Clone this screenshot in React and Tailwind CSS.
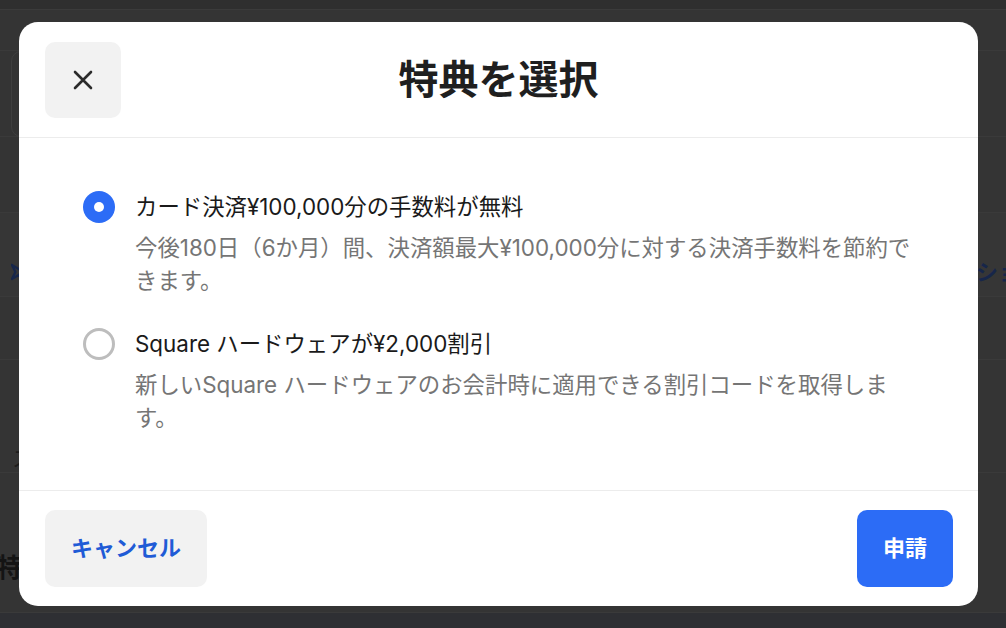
import React, { useState } from 'react';

const font = "font-[Inter,'Noto_Sans_CJK_JP',sans-serif]";

const offers = [
  {
    id: 'fee',
    title: 'カード決済¥100,000分の手数料が無料',
    desc: '今後180日（6か月）間、決済額最大¥100,000分に対する決済手数料を節約できます。',
  },
  {
    id: 'hardware',
    title: 'Square ハードウェアが¥2,000割引',
    desc: '新しいSquare ハードウェアのお会計時に適用できる割引コードを取得します。',
  },
];

const Radio = ({ checked }) =>
  checked ? (
    <span className="mt-[1px] flex h-8 w-8 shrink-0 items-center justify-center rounded-full bg-[#2c6cf6]">
      <span className="h-2.5 w-2.5 rounded-full bg-white" />
    </span>
  ) : (
    <span className="mt-[1px] h-8 w-8 shrink-0 rounded-full border-[3px] border-[#bdbdbd]" />
  );

// dimmed page behind the dialog
const Backdrop = () => (
  <div className="flex h-full flex-col">
    <div className="h-[10px] border-b border-[#3b3b3b] bg-[#2f2f2f]" />
    <div className="h-[41px] border-b border-[#3a3a3a]" />
    <div className="flex h-[86px] border-b border-[#3a3a3a] px-[11px]">
      <div className="h-[86px] w-[300px] rounded-[10px] border border-[#3f3f3f]" />
    </div>
    <div className="h-[76px] border-b border-[#3a3a3a]" />
    <div className="flex h-[84px] items-center justify-between border-b border-[#3a3a3a] bg-[#363636] pl-[11px]">
      <svg width="16" height="18" viewBox="0 0 18 20" className="mt-[34px]">
        <path d="M1 2 L9 7 L17 2 L13 10 L17 18 L9 13 L1 18 L5 10 Z" fill="none" stroke="#17264a" strokeWidth="2.6" strokeLinejoin="round" />
      </svg>
      <span className="mt-[36px] mr-[-14px] text-[22px] font-bold text-[#17264a]">ショ</span>
    </div>
    <div className="h-[63px] border-b border-[#3a3a3a]" />
    <div className="flex h-[113px] items-center border-b border-[#3a3a3a] pl-[12px] pt-[86px]">
      <span className="text-[21px] text-[#1c1c1c]">ス</span>
    </div>
    <div className="flex h-[140px] items-center border-b border-[#3a3a3a] pt-[50px]">
      <span className="ml-[-4px] text-[26px] font-bold text-[#141414]">特典</span>
    </div>
    <div className="flex-1 bg-[#2e2f33]" />
  </div>
);

export default function App() {
  const [selected, setSelected] = useState('fee');

  return (
    <div className={`relative h-[628px] w-[1006px] overflow-hidden bg-[#343434] ${font}`}>
      <Backdrop />

      <div className="absolute inset-0 flex pl-[19px] pt-[22px]">
        <div className="flex h-[584px] w-[959px] flex-col rounded-[19px] bg-white">
          {/* header */}
          <div className="relative flex h-[116px] items-center border-b border-[#ececec] px-[26px]">
            <button className="flex h-[76px] w-[76px] items-center justify-center rounded-[10px] bg-[#f2f2f2]">
              <svg width="20" height="20" viewBox="0 0 20 20">
                <path d="M2 2 L18 18 M18 2 L2 18" stroke="#2b2b2b" strokeWidth="2.6" strokeLinecap="round" />
              </svg>
            </button>
            <h2 className="pointer-events-none absolute inset-x-0 text-center text-[40px] font-bold leading-none text-[#1f1f1f]">
              特典を選択
            </h2>
          </div>

          {/* body */}
          <div className="flex flex-1 flex-col gap-[30px] pl-[64px] pr-[62px] pt-[52px]">
            {offers.map((o) => (
              <label key={o.id} className="flex cursor-pointer gap-[20px]" onClick={() => setSelected(o.id)}>
                <Radio checked={selected === o.id} />
                <div className="flex flex-col gap-[8px]">
                  <div className="text-[22.4px] leading-[33px] text-[#1a1a1a]">{o.title}</div>
                  <div className="text-[22.4px] leading-[33px] text-[#757575]">{o.desc}</div>
                </div>
              </label>
            ))}
          </div>

          {/* footer */}
          <div className="flex items-center justify-between border-t border-[#ececec] px-[25px] py-[19px]">
            <button className="ml-[1px] h-[77px] rounded-[10px] bg-[#f2f2f2] px-[26px] text-[22px] font-bold text-[#1f5bd6]">
              キャンセル
            </button>
            <button className="h-[77px] rounded-[10px] bg-[#2c6cf6] px-[26px] text-[22px] font-bold text-white">
              申請
            </button>
          </div>
        </div>
      </div>
    </div>
  );
}
